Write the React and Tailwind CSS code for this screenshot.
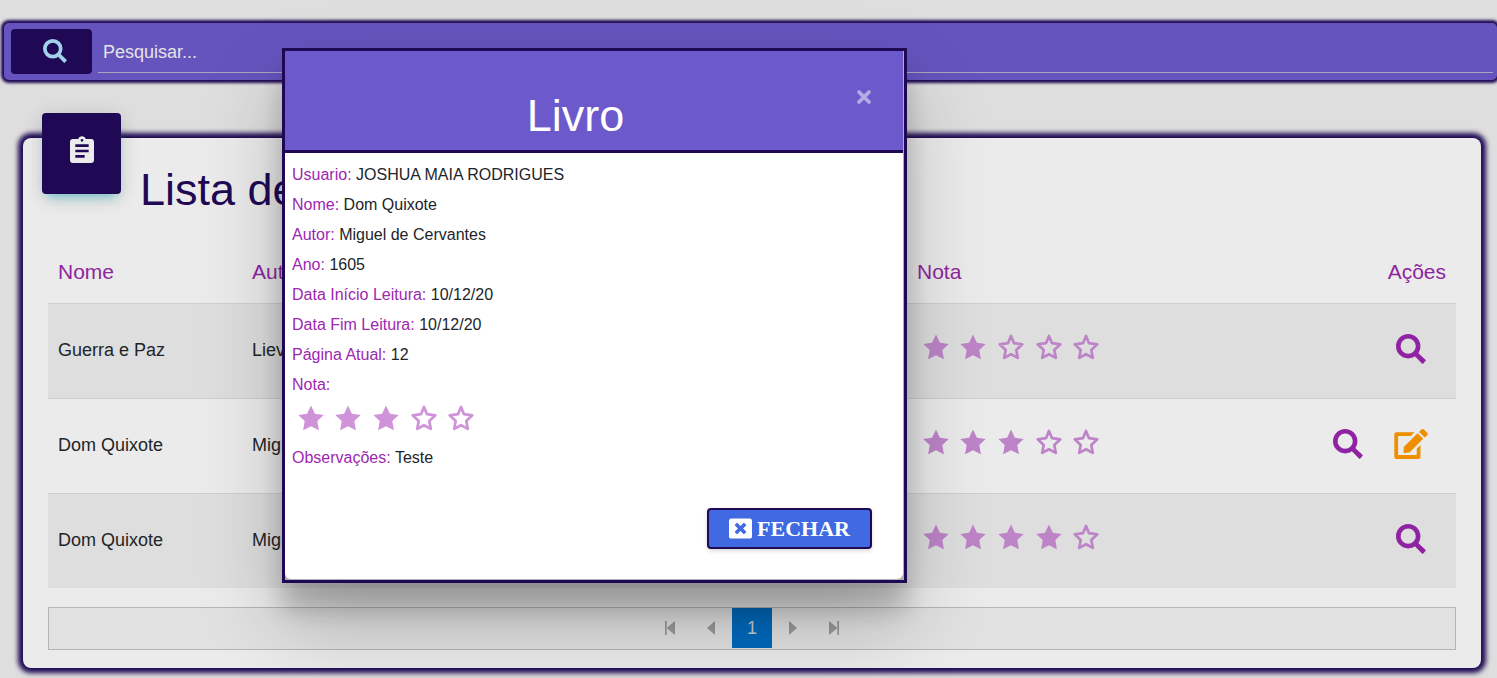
import React from "react";
import { FaWindowClose } from "react-icons/fa";
import { MdAssignment } from "react-icons/md";

const books = [
  { nome: "Guerra e Paz", autor: "Liev Tolstói", nota: 2, editable: false },
  { nome: "Dom Quixote", autor: "Miguel de Cervantes", nota: 3, editable: true },
  { nome: "Dom Quixote", autor: "Miguel de Cervantes", nota: 4, editable: false },
];

const details = [
  ["Usuario:", "JOSHUA MAIA RODRIGUES"],
  ["Nome:", "Dom Quixote"],
  ["Autor:", "Miguel de Cervantes"],
  ["Ano:", "1605"],
  ["Data Início Leitura:", "10/12/20"],
  ["Data Fim Leitura:", "10/12/20"],
  ["Página Atual:", "12"],
  ["Nota:", ""],
];

function SearchIcon({ className }) {
  return (
    <svg viewBox="0 0 30 30" className={className} fill="currentColor" stroke="currentColor" aria-hidden="true">
      <circle cx="12.2" cy="12.2" r="9.900" fill="none" strokeWidth="4.600" />
      <path d="M18.800 20.900v-1l1-1h1l8 7.600-2.200 2.400z" strokeWidth="1.800" strokeLinejoin="round" />
    </svg>
  );
}

function EditIcon({ className }) {
  return (
    <svg viewBox="0 0 34 30" className={className} fill="currentColor" aria-hidden="true">
      <path
        d="M20.500 3.300l-3.700 3.700H4.100v19h18.600v-6.300l3.800-3.700v12a2 2 0 0 1-2 2H2.300a2 2 0 0 1-2-2V5.300a2 2 0 0 1 2-2z"
      />
      <path d="M23.600 4.300l5.600 5.400L16 23l-.8.500-5 .5a.8.8 0 0 1-.8-.8l.5-5 .4-.7z" />
      <path d="M25 2.900l2.400-2.300a1.800 1.800 0 0 1 2.500 0l3.300 3.200a1.800 1.800 0 0 1 0 2.500l-2.500 2.300z" />
    </svg>
  );
}

function Star({ filled }) {
  return (
    <svg viewBox="0 0 26 26" className="h-[26px] w-[26px]" fill="currentColor" aria-hidden="true">
      {filled ? (
        <path d="M13 .5l3.900 8.300 8.800 1.100-6.400 6.200 1.600 9.200L13 21.200l-7.900 4.100 1.600-9.200L.3 9.900l8.800-1.100z" />
      ) : (
        <path
          d="M13 2l3 7.200 8.300 1.100-6 5.600 1.500 8L13 20.200l-6.800 3.700 1.500-8-6-5.600L10 9.200z"
          fill="none"
          stroke="currentColor"
          strokeWidth="2.700"
          strokeLinejoin="round"
        />
      )}
    </svg>
  );
}

function Stars({ value, className }) {
  return (
    <div role="img" aria-label={`Nota ${value} de 5`} className={`grid w-[188px] grid-cols-5 justify-items-center ${className}`}>
      {[1, 2, 3, 4, 5].map((n) => (
        <Star key={n} filled={n <= value} />
      ))}
    </div>
  );
}

function PagerButton({ label, children }) {
  return (
    <button type="button" aria-label={label} className="flex h-10 w-10 items-center justify-center text-[#999999]">
      <svg viewBox="0 0 14 14" className="h-[14px] w-[14px]" fill="currentColor">
        {children}
      </svg>
    </button>
  );
}

function SearchBar() {
  return (
    <form className="ml-1 flex h-[57px] items-center gap-[6px] rounded-[5px] bg-[#6554bd] pr-1 pl-[7px] shadow-[0_0_3px_3px_#1f0954]">
      <button type="button" aria-label="Buscar" className="flex h-[45px] w-[81px] shrink-0 items-center justify-center rounded-[4px] bg-[#1f0954] pb-[2px] pl-[6px] text-[#a1d2ec]">
        <SearchIcon className="h-6 w-6" />
      </button>
      <input
        type="text"
        aria-label="Pesquisar"
        placeholder="Pesquisar..."
        className="h-[42px] min-w-0 flex-1 border-b border-[#a9a5bd] bg-transparent px-[5px] pt-[3px] text-[18px] text-[#e4e4e4] outline-none placeholder:text-[#e4e4e4] placeholder:opacity-100"
      />
    </form>
  );
}

function BookTable() {
  return (
    <table className="w-full table-fixed border-collapse text-left text-[18px] text-[#212529]">
      <colgroup>
        <col className="w-[194px]" />
        <col />
        <col className="w-[312px]" />
        <col className="w-[237px]" />
      </colgroup>
      <thead>
        <tr className="h-[63px] text-[21px] text-[#8e24a0]">
          <th className="px-[10px] font-normal">Nome</th>
          <th className="px-[10px] font-normal">Autor</th>
          <th className="px-[10px] font-normal">Nota</th>
          <th className="px-[10px] text-right font-normal">Ações</th>
        </tr>
      </thead>
      <tbody>
        {books.map((b, i) => (
          <tr key={i} className="h-[95px] border-t border-[#cfcfcf] odd:bg-[#dedede]">
            <td className="px-[10px]">{b.nome}</td>
            <td className="px-[10px]">{b.autor}</td>
            <td className="px-[10px] pb-[8px]">
              <Stars value={b.nota} className="text-[#bd84c8]" />
            </td>
            <td className="pr-[28px] pb-[3px]">
              <div className="flex items-center justify-end gap-[31px] text-[#9023a3]">
                <button type="button" aria-label="Visualizar" className={b.editable ? "" : "pr-[2px]"}>
                  <SearchIcon className="h-[30px] w-[30px]" />
                </button>
                {b.editable && (
                  <button type="button" aria-label="Editar" className="text-[#ed8f00]">
                    <EditIcon className="h-[30px] w-[34px]" />
                  </button>
                )}
              </div>
            </td>
          </tr>
        ))}
      </tbody>
    </table>
  );
}

function Pager() {
  return (
    <nav aria-label="Paginação" className="mt-[19px] flex h-[43px] items-start justify-center gap-px border border-[#b5b5b5] bg-[#e1e1e1]">
      <PagerButton label="Primeira página">
        <path d="M2 0h1.700v14H2zM12 0v14L3.500 7z" />
      </PagerButton>
      <PagerButton label="Página anterior">
        <path d="M11 0v14L3 7z" />
      </PagerButton>
      <button type="button" className="h-10 w-10 bg-[#0069bb] text-[18px] text-[#c9cdd0]">1</button>
      <PagerButton label="Próxima página">
        <path d="M3 0v14L11 7z" />
      </PagerButton>
      <PagerButton label="Última página">
        <path d="M10.300 0H12v14h-1.700zM2 0v14L10.500 7z" />
      </PagerButton>
    </nav>
  );
}

function BookDialog() {
  return (
    <div className="fixed inset-0 flex items-start pt-12 pl-[282px]">
      <div role="dialog" aria-modal="true" aria-labelledby="dialog-title" className="w-[625px] border-[3px] border-[#1f0954] bg-[#b0b0b0] pr-px pb-px shadow-[0_27px_24px_0_rgba(0,0,0,0.2),0_40px_77px_0_rgba(0,0,0,0.22)]">
        <div className="overflow-hidden rounded-b-md bg-white">
          <header className="flex h-[102px] items-start border-b-[3px] border-[#1f0954] bg-[#6c5acd] pr-[31px] pl-6">
            <h2 id="dialog-title" className="flex-1 pt-[39px] text-center text-[45px] leading-[52px] text-white">Livro</h2>
            <button type="button" aria-label="Fechar janela" className="mt-[38px] flex h-4 w-[30px] items-center justify-end text-[#b5abe6]">
              <svg viewBox="0 0 16 16" className="h-4 w-4" fill="none" stroke="currentColor" strokeWidth="3.800" strokeLinecap="round">
                <path d="M3 3l10 10M13 3L3 13" />
              </svg>
            </button>
          </header>
          <div className="px-[7px] pt-[7px] text-[16px] leading-[30px] text-[#212529]">
            {details.map(([label, value]) => (
              <p key={label}>
                <span className="text-[#9c27b0]">{label}</span> {value}
              </p>
            ))}
            <Stars value={3} className="my-[5px] text-[#ce93d8]" />
            <p className="pt-[7px]">
              <span className="text-[#9c27b0]">Observações:</span> Teste
            </p>
          </div>
          <footer className="flex justify-end pt-[35px] pr-[31px] pb-[30px]">
            <button type="button" className="flex h-[41px] w-[165px] items-center justify-center gap-[5px] rounded-[4px] border-2 border-[#1f0954] bg-[#4169e1] font-['Liberation_Serif',serif] text-[22px] font-bold text-white shadow-[0_2px_4px_rgba(0,0,0,0.15)]">
              <FaWindowClose className="h-[23px] w-[23px]" />
              FECHAR
            </button>
          </footer>
        </div>
      </div>
    </div>
  );
}

export default function App() {
  return (
    <div className="min-h-screen overflow-hidden bg-[#dedede] pt-[23px] pb-[10px] font-['Liberation_Sans',Arial,sans-serif]">
      <SearchBar />
      <main className="mt-[58px] mr-4 ml-[23px] rounded-[8px] bg-[#ebebeb] px-[25px] pb-[18px] shadow-[0_0_5px_5px_#1f0954]">
        <div className="flex h-[102px] items-start gap-[19px]">
          <div className="-mt-[25px] -ml-[6px] flex h-[81px] w-[79px] shrink-0 items-center justify-center rounded-[4px] bg-[#1f0954] pb-[5px] text-[#ebebeb] shadow-[0_4px_20px_rgba(0,0,0,0.14),0_7px_10px_-5px_rgba(0,188,212,0.5)]">
            <MdAssignment className="h-8 w-8" />
          </div>
          <h1 className="pt-[26px] text-[45px] leading-[52px] text-[#1f0954]">Lista de Livros</h1>
        </div>
        <BookTable />
        <Pager />
      </main>
      <BookDialog />
    </div>
  );
}
